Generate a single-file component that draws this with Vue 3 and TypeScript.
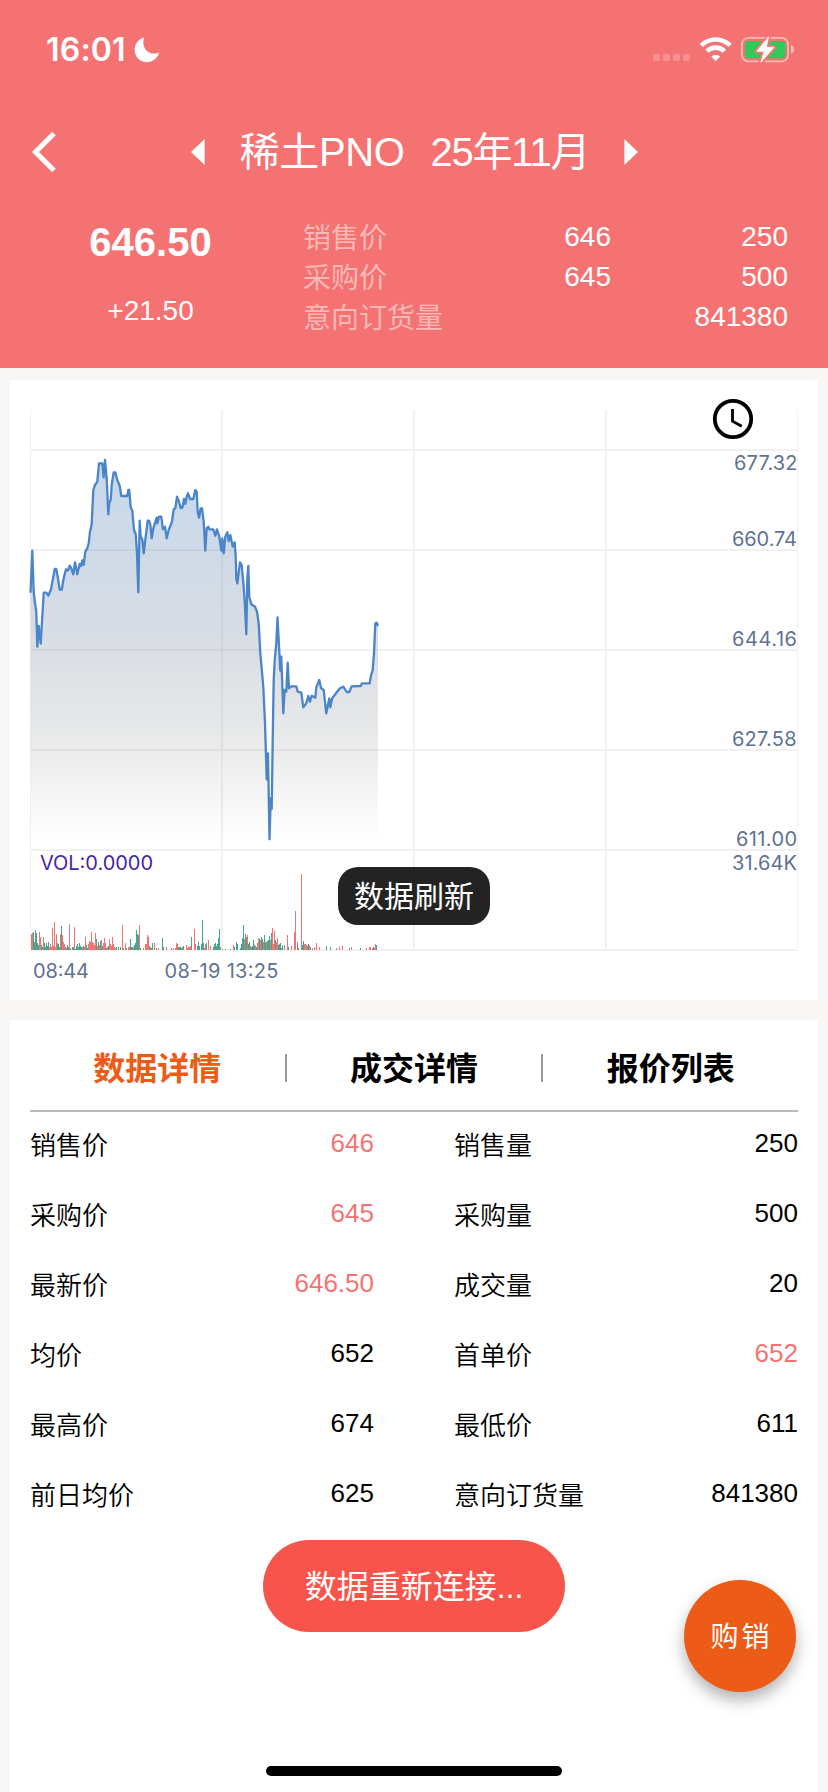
<script setup lang="ts">
interface Cell {
  label: string
  value: string
  hot?: boolean
}

interface Bar {
  x: number
  h: number
  up: boolean
}

const tabs = ['数据详情', '成交详情', '报价列表']

const quotes = [
  { label: '销售价', price: '646', amount: '250' },
  { label: '采购价', price: '645', amount: '500' },
  { label: '意向订货量', price: '', amount: '841380' },
]

const rows: [Cell, Cell][] = [
  [{ label: '销售价', value: '646', hot: true }, { label: '销售量', value: '250' }],
  [{ label: '采购价', value: '645', hot: true }, { label: '采购量', value: '500' }],
  [{ label: '最新价', value: '646.50', hot: true }, { label: '成交量', value: '20' }],
  [{ label: '均价', value: '652' }, { label: '首单价', value: '652', hot: true }],
  [{ label: '最高价', value: '674' }, { label: '最低价', value: '611' }],
  [{ label: '前日均价', value: '625' }, { label: '意向订货量', value: '841380' }],
]

const axisLabels = [
  { text: '677.32', y: 470, x: 734, w: 63.5 },
  { text: '660.74', y: 546, x: 732, w: 65 },
  { text: '644.16', y: 646, x: 732, w: 65 },
  { text: '627.58', y: 746, x: 732, w: 64.5 },
  { text: '611.00', y: 846, x: 736, w: 61 },
  { text: '31.64K', y: 870, x: 732, w: 65 },
]

const linePoints =
  '30.5,592.7 32.3,550.7 33.7,591.7 35,603 36.3,611.7 37.3,646.7 38.7,626 40.7,643.7 42.3,616.7 43.7,592.7 46.3,592.7 48.3,595.7 51,589.3 53.3,576.7 54.7,569 56.3,569 57.7,576.7 59.7,589.7 61.7,589.7 64,576.7 66,569.3 68,570.5 69.7,565.7 71.3,568.3 73.3,574.3 75,562.3 77.3,574.3 79.7,564 81,566 82.3,560.3 83.7,565 85.3,551.7 87.3,548.3 88.7,543.3 90,531.7 91.7,524 93.3,490 95,485 97.3,481.7 99,463.3 102.3,463.3 103.7,477.3 105,460 106.7,478.3 108.3,514.3 109.3,502.7 110.7,500 111.7,485 113.7,472.3 115.3,472.3 117.3,480 119.7,485.7 121.3,496 127.3,496 128.3,490 129.3,490 130.7,507.3 132.3,510.7 134,530 135.7,534 137,553.3 138.3,592.3 139.7,520.7 140.7,536.7 142.3,539.3 143.7,553.3 145.7,536.7 147.7,520.7 149,520.7 150.3,524.3 151.7,538.3 153.3,528.3 156.7,517.7 157.3,523.3 159,516.7 161.3,516.7 163,529.3 165,526.7 166.7,538.3 168.7,530 172,521.7 173.7,509.3 175.3,508.3 177,496.7 179,501.7 180.7,508 182.3,507.7 184,499 185.3,504 186.7,496.7 188,493.3 190,499 193.3,499 195.3,490 196.7,491.7 197.7,511.7 199,517.7 200.7,508.3 202,508.3 203.7,521.7 205.3,550.7 206.7,528.3 208.3,526.7 209.3,529.3 213.3,529.3 215.3,535.7 217,529.3 219.3,536.7 221.3,550.7 222.3,538.3 223.7,553.3 225.3,536.7 227.3,532.3 228.7,541 230.3,535 232.7,546.7 234.7,542.3 235.7,556.7 236.3,578.3 237.3,583.3 240,562.3 241.7,565 243.7,586.7 245,606.7 246.3,634.3 247.3,580 248.3,566 249.3,596.7 251.3,604.3 255,606.7 257,611.7 258.7,623.3 260.3,653.3 263.3,686.7 265,723.3 266.7,779.3 268,753.3 269.5,839.3 270.7,798.3 271.7,809 272.7,740 273.7,680 274.7,660 276.3,643.3 277.5,617.3 278.7,640 280.3,670.7 281.3,656.7 283.3,713.3 284.7,690 286.3,691.7 287.7,662.7 289,688.3 291.3,686.3 296.3,686.3 297.7,691.7 301.3,692.7 303.3,707.3 306.3,703.3 308.3,696 310,701.7 311.7,695.7 315.3,697.7 316.3,687.3 319.3,680 321,688 323.7,690 326.3,713.3 329.3,698.3 330.3,707.3 332,698.7 336.7,692.3 340,688.3 343.3,686.7 346.7,692 349.3,692 351.7,686.3 360.7,686 362,683.3 369.7,683.3 370.7,676.7 372.7,670 374,653.3 375.3,623.3 376.7,622.7 378,626'

const areaPoints = `30.5,850 ${linePoints} 378,850`

// Runs of adjacent volume bars: start column, then direction and height in thirds of a pixel.
const volumeRuns =
  '31:r48r50g54g25g60g50g22g15r54r40g15g8r38g20g8g22g12g25r8r18r8r66r12r84r10r48g22g18g8r48g72r45r25r18g8r5g15g8r78g5 72:g8g8r68g4g12g18g8g20g12g8r10g12r8r40g15g5r18r26r24r54r25r22r15r50g34r12g24r15g27r30g12r22r36r22g5r8g12r34r18r12r40r18r8r5g8 118:g8 120:g8 122:r75r5 125:r20g5 128:r8r8g33g10g10r8g15g22g60g48g46r75g5 143:r5 145:r18r18r45r38g12r8g5g22 154:r22 156:g5 158:r5 162:g35g8 166:r8 171:r5 173:r5 175:r5r20r18g10g8g8g5r10g12 186:r15r5r8r8r12g38 194:r63r18 197:g12g24g12 201:g18g90g20r5r18g22 208:r30 210:r12 213:g8g18g22g12g18g36g63r10 222:g4 225:g3 230:g3 233:r14g10 236:g24g18 240:g5g18g35g75r33g48g38r45g18g24r12g10g12g30g15r12g10r20r35g33r30g40g33r24g45g24r24g27g30g42r30g50r66r18r58g30r24r37g15g18g22g5g15 284:r14 287:r46g8 291:r12 294:r54r117 297:g24r5 301:r228g15g27r18r18r15g12g18r15g8 312:r5 314:r10 316:r21 319:r10 326:g12 330:g8 336:r5 339:r8 342:r12 349:g5 351:r10 360:g5 366:r5 369:r10r8 372:r5g8r6r18g15'

const bars: Bar[] = volumeRuns.split(' ').flatMap((run) => {
  const [start, body] = run.split(':')
  return (body.match(/[rg]\d+/g) ?? []).map((token, i) => ({
    x: Number(start) + i,
    h: Number(token.slice(1)) / 3,
    up: token[0] === 'r',
  }))
})
</script>

<template>
  <div class="screen">
    <header class="head">
      <div class="status">
        <div class="clock">
          <span class="time">16:01</span>
          <svg class="moon" width="26" height="26" viewBox="0 0 26 26">
            <path d="M10.2.4C9.6 1.8 9.3 3.500 9.300 5.200 9.300 11.900 14 16.600 20.300 16.600c1.800 0 3.300-.3 4.900-1C23.500 21.400 18.700 25.200 12.900 25.200 5.900 25.200.6 19.700.6 12.800.6 7 4.300 2 10.200.4Z" fill="#fff" />
          </svg>
        </div>
        <svg class="signals" width="144" height="28" viewBox="652 36 144 28">
          <g fill="#fff" fill-opacity="0.22">
            <rect v-for="i in 4" :key="i" :x="643 + i * 10" y="54" width="7" height="7" rx="2" />
          </g>
          <g fill="none" stroke="#fff" stroke-width="4.700">
            <path d="M701.300 45.400a20.500 20.500 0 0 1 28.800 0" />
            <path d="M706.900 51.200a12.500 12.500 0 0 1 17.600 0" />
          </g>
          <path d="M715.700 61.200l-4.400-4.600a6.400 6.400 0 0 1 8.800 0Z" fill="#fff" />
          <rect x="741.900" y="37.900" width="46.200" height="23.400" rx="6.500" fill="none" stroke="#fff" stroke-opacity="0.5" stroke-width="1.800" />
          <path d="M791 45v9c1.800-.7 3-2.500 3-4.500s-1.200-3.800-3-4.500Z" fill="#fff" fill-opacity="0.5" />
          <rect x="745" y="41" width="40.500" height="17.200" rx="3.500" fill="#34c759" />
          <path d="M768.500 36.800L756.800 51.300h7.400l-3.300 10.900 13-14.900h-7.600Z" fill="#fff" stroke="#f57272" stroke-width="4.500" stroke-linejoin="round" />
          <path d="M768.500 36.800L756.800 51.300h7.400l-3.300 10.900 13-14.900h-7.600Z" fill="#fff" stroke="#fff" stroke-width="0.800" stroke-linejoin="round" />
        </svg>
      </div>

      <nav class="nav">
        <svg class="back" width="28" height="44" viewBox="0 0 28 44">
          <path d="M23 3.500L4.500 22l18.500 18.500" fill="none" stroke="#fff" stroke-width="5" />
        </svg>
        <div class="picker">
          <svg width="14" height="26" viewBox="0 0 14 26"><path d="M13.600 0v26L0 13Z" fill="#fff" /></svg>
          <h1 class="title"><span class="name">稀土PNO</span><span class="month">25年11月</span></h1>
          <svg width="14" height="26" viewBox="0 0 14 26"><path d="M.4 0v26L14 13Z" fill="#fff" /></svg>
        </div>
      </nav>

      <section class="summary">
        <div class="last">
          <strong>646.50</strong>
          <span>+21.50</span>
        </div>
        <div class="quotes">
          <div v-for="q in quotes" :key="q.label" class="quote">
            <span class="q-label">{{ q.label }}</span>
            <span class="q-price">{{ q.price }}</span>
            <span class="q-amount">{{ q.amount }}</span>
          </div>
        </div>
      </section>
    </header>

    <section class="card chart-card">
      <svg class="chart" width="808" height="620" viewBox="10 380 808 620">
        <defs>
          <linearGradient id="area-fill" gradientUnits="userSpaceOnUse" x1="0" y1="460" x2="0" y2="845">
            <stop offset="0" stop-color="#3c7cc3" stop-opacity="0.3" />
            <stop offset="0.45" stop-color="#5c708e" stop-opacity="0.24" />
            <stop offset="0.7" stop-color="#666c72" stop-opacity="0.16" />
            <stop offset="1" stop-color="#777" stop-opacity="0" />
          </linearGradient>
        </defs>
        <g stroke="#f1f1f1" stroke-width="2">
          <path v-for="y in [450, 550, 650, 750, 850, 950]" :key="y" :d="`M30 ${y}H798`" />
          <path v-for="x in [222, 414, 606]" :key="x" :d="`M${x} 410V950`" />
          <path d="M30.500 410V950M797.500 410V950" stroke-width="1" />
        </g>
        <polygon :points="areaPoints" fill="url(#area-fill)" />
        <polyline :points="linePoints" fill="none" stroke="#4a85ca" stroke-width="2.300" stroke-linejoin="round" />
        <g shape-rendering="crispEdges">
          <rect
            v-for="b in bars"
            :key="b.x"
            :x="b.x"
            :y="950 - b.h"
            width="1"
            :height="b.h"
            :fill="b.up ? '#f57373' : '#42a78c'"
          />
        </g>
        <g class="axis">
          <text v-for="a in axisLabels" :key="a.text" :x="a.x" :y="a.y" :textLength="a.w">{{ a.text }}</text>
          <text x="33" y="978" textLength="56">08:44</text>
          <text x="164.500" y="978" textLength="114">08-19 13:25</text>
          <text class="vol" x="40" y="870" textLength="113">VOL:0.0000</text>
        </g>
        <g fill="none" stroke="#000">
          <circle cx="733" cy="419" r="18.200" stroke-width="3.800" />
          <path d="M732.500 409v12.200l9.300 5.100" stroke-width="2.800" />
        </g>
      </svg>
      <div class="toast">数据刷新</div>
    </section>

    <section class="card detail-card">
      <div class="tabs">
        <div v-for="(t, i) in tabs" :key="t" class="tab" :class="{ active: i === 0 }">{{ t }}</div>
      </div>
      <div v-for="(row, r) in rows" :key="r" class="row">
        <div v-for="cell in row" :key="cell.label" class="cell">
          <span class="label">{{ cell.label }}</span>
          <span class="value" :class="{ hot: cell.hot }">{{ cell.value }}</span>
        </div>
      </div>
    </section>

    <div class="reconnect">数据重新连接...</div>
    <button class="fab" type="button">购销</button>
    <div class="home-bar"></div>
  </div>
</template>

<style>
body {
  margin: 0;
  background: #f8f7f5;
}
</style>

<style scoped>
.screen {
  position: relative;
  box-sizing: border-box;
  display: flex;
  flex-direction: column;
  width: 828px;
  height: 1792px;
  overflow: hidden;
  background: #f8f7f5;
  color: #000;
  font-family: "Liberation Sans", "Noto Sans CJK SC", sans-serif;
}

.head {
  flex: none;
  height: 368px;
  background: #f57272;
  color: #fff;
}

.status {
  display: flex;
  align-items: center;
  justify-content: space-between;
  height: 100px;
  padding: 0 32px 0 46px;
}

.clock {
  display: flex;
  align-items: center;
  gap: 7px;
}

.time {
  width: 81px;
  font: 600 32px/40px Inter, sans-serif;
  letter-spacing: 0.200px;
  white-space: nowrap;
}

.nav {
  display: flex;
  align-items: center;
  height: 104px;
  padding: 0 31px;
}

.back {
  flex: none;
}

.picker {
  flex: 1;
  display: flex;
  align-items: center;
  justify-content: center;
  gap: 35px;
  margin-right: 27px;
}

.title {
  display: flex;
  gap: 26px;
  margin: 0;
  font-size: 40px;
  font-weight: 400;
  line-height: 62px;
  white-space: nowrap;
}

.name {
  letter-spacing: -0.400px;
}

.month {
  letter-spacing: -1.200px;
}

.summary {
  display: flex;
  padding-top: 13px;
}

.last {
  display: flex;
  flex-direction: column;
  align-items: center;
  width: 303px;
}

.last strong {
  margin-right: 2px;
  font-size: 40px;
  line-height: 50px;
}

.last span {
  margin: 24px 2px 0 0;
  font-size: 28px;
  line-height: 40px;
}

.quotes {
  flex: 1;
  padding-right: 40px;
}

.quote {
  display: grid;
  grid-template-columns: 180px 128px 1fr;
  height: 40px;
  font-size: 28px;
  line-height: 40px;
  text-align: right;
}

.q-label {
  line-height: 44px;
  text-align: left;
  color: rgba(255, 255, 255, 0.5);
}

.card {
  position: relative;
  flex: none;
  margin: 0 10px;
  background: #fff;
}

.chart-card {
  height: 620px;
  margin-top: 12px;
}

.chart {
  display: block;
}

.axis {
  font-family: Inter, sans-serif;
  font-size: 20px;
  fill: #5f7292;
}

.axis .vol {
  fill: #4527a8;
}

.toast {
  position: absolute;
  top: 487px;
  left: 328px;
  width: 152px;
  height: 58px;
  border-radius: 20px;
  background: rgba(18, 18, 18, 0.93);
  color: #fff;
  font-size: 30px;
  line-height: 60px;
  text-align: center;
}

.detail-card {
  box-sizing: border-box;
  flex: 1;
  margin-top: 20px;
  padding: 0 20px;
}

.tabs {
  display: flex;
  align-items: center;
  height: 90px;
  border-bottom: 2px solid #bbb;
}

.tab {
  flex: 1;
  height: 28px;
  margin-top: 5px;
  border-right: 2px solid #999;
  font-size: 32px;
  font-weight: 700;
  line-height: 30px;
  text-align: center;
}

.tab:last-child {
  border-right: 0;
}

.tab.active {
  color: #ed5c17;
}

.row {
  display: grid;
  grid-template-columns: 344px 344px;
  justify-content: space-between;
  height: 70px;
}

.cell {
  display: flex;
  justify-content: space-between;
  font-size: 26px;
}

.label {
  font-weight: 350;
  line-height: 68px;
}

.value {
  line-height: 63px;
}

.value.hot {
  color: #f57373;
}

.reconnect {
  position: absolute;
  top: 1540px;
  left: 263px;
  width: 302px;
  height: 92px;
  border-radius: 46px;
  background: #f7554c;
  color: #fff;
  font-size: 32px;
  line-height: 94px;
  text-align: center;
}

.fab {
  position: absolute;
  top: 1580px;
  left: 684px;
  width: 112px;
  height: 112px;
  padding: 3px 0 0 3px;
  border: 0;
  border-radius: 50%;
  background: #ed5c17;
  box-shadow: 0 8px 16px rgba(0, 0, 0, 0.3);
  color: #fff;
  font: 400 28px/40px "Liberation Sans", "Noto Sans CJK SC", sans-serif;
  letter-spacing: 3px;
}

.home-bar {
  position: absolute;
  top: 1766px;
  left: 266px;
  width: 296px;
  height: 10px;
  border-radius: 5px;
  background: #000;
}
</style>
